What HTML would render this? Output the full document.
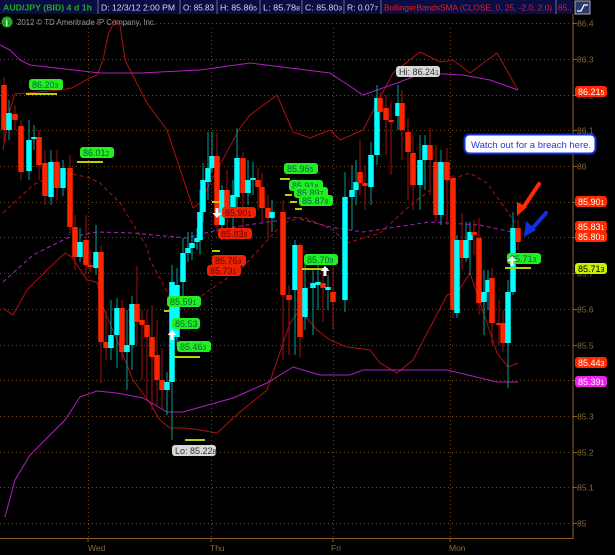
<!DOCTYPE html>
<html><head><meta charset="utf-8"><style>
html,body{margin:0;padding:0;background:#000;width:615px;height:555px;overflow:hidden}
svg{display:block}
text{font-family:"Liberation Sans",sans-serif}
</style></head><body>
<svg id="s" width="615" height="555" viewBox="0 0 615 555" xmlns="http://www.w3.org/2000/svg">
<rect width="615" height="555" fill="#000"/>
<rect x="0" y="0" width="573" height="14" fill="#0a0c45"/>
<g stroke="#6a6a8a" stroke-width="1">
<line x1="98" y1="0" x2="98" y2="14"/><line x1="180" y1="0" x2="180" y2="14"/><line x1="217" y1="0" x2="217" y2="14"/>
<line x1="260" y1="0" x2="260" y2="14"/><line x1="302" y1="0" x2="302" y2="14"/><line x1="344" y1="0" x2="344" y2="14"/>
<line x1="381" y1="0" x2="381" y2="14"/><line x1="556" y1="0" x2="556" y2="14"/>
</g>
<g font-size="8.5" fill="#d8d8e0">
<text x="3" y="10.5" fill="#22aa22" font-weight="bold" textLength="89" lengthAdjust="spacingAndGlyphs">AUD/JPY (BID) 4 d 1h</text>
<text x="101" y="10.5" textLength="74" lengthAdjust="spacingAndGlyphs">D: 12/3/12 2:00 PM</text>
<text x="183" y="10.5" textLength="31" lengthAdjust="spacingAndGlyphs">O: 85.83</text>
<text x="220" y="10.5" textLength="37" lengthAdjust="spacingAndGlyphs">H: 85.86<tspan font-size="6.5">5</tspan></text>
<text x="263" y="10.5" textLength="37" lengthAdjust="spacingAndGlyphs">L: 85.78<tspan font-size="6.5">8</tspan></text>
<text x="305" y="10.5" textLength="37" lengthAdjust="spacingAndGlyphs">C: 85.80<tspan font-size="6.5">3</tspan></text>
<text x="347" y="10.5" textLength="31" lengthAdjust="spacingAndGlyphs">R: 0.07<tspan font-size="6.5">7</tspan></text>
<text x="384" y="10.5" fill="#e02020" textLength="168" lengthAdjust="spacingAndGlyphs">BollingerBandsSMA (CLOSE, 0, 25, -2.0, 2.0)</text>
<text x="558" y="10.5" fill="#e02020" textLength="14" lengthAdjust="spacingAndGlyphs">85..</text>
</g>
<rect x="575" y="1" width="15" height="13" fill="#2a3a6a" stroke="#aab" stroke-width="1"/>
<polyline points="577,11 581,11 584,5 588,5" fill="none" stroke="#fff" stroke-width="1.3"/>
<circle cx="7" cy="22" r="5.5" fill="#22aa22"/>
<text x="5.5" y="26" font-size="9" fill="#fff" font-weight="bold">i</text>
<text x="17" y="25" font-size="8.5" fill="#9a9a9a" textLength="139" lengthAdjust="spacingAndGlyphs">2012 © TD Ameritrade IP Company, Inc.</text>
<g id="grid" stroke="#6a4a1a" stroke-width="1" stroke-dasharray="1,3"></g>
<line x1="573" y1="14" x2="573" y2="539" stroke="#8a6020"/>
<line x1="0" y1="538.5" x2="573" y2="538.5" stroke="#8a6020"/>
<g stroke="#8a6020"><line x1="88" y1="538" x2="88" y2="542"/><line x1="211" y1="538" x2="211" y2="542"/><line x1="333" y1="538" x2="333" y2="542"/><line x1="450" y1="538" x2="450" y2="542"/></g>
<g font-size="8.5" fill="#8a6a30">
<text x="88" y="551">Wed</text><text x="210" y="551">Thu</text><text x="331" y="551">Fri</text><text x="449" y="551">Mon</text>
</g>
<g id="ax" font-size="8.5" fill="#8a6a30"></g>
<g id="bands" fill="none" stroke-width="1">
<polyline stroke="#b01010" points="3,150 10,110 15,94 27,93 60,90 72,88 90,78 97,75 103,60 108,35 115,20 120,25 125,60 147,103 167,130 193,208 200,203 217,170 240,128 250,115 277,95 293,132 310,138 330,130 340,140 363,130 393,73 420,52 440,62 453,60 470,73 497,53 518,90"/>
<polyline stroke="#b01010" points="3,308 13,315 27,290 47,270 65,253 72,257 87,280 97,282 103,307 117,340 133,380 150,403 160,420 170,428 185,428 200,430 217,433 240,412 267,390 290,323 300,310 317,330 330,340 347,347 370,350 380,363 397,373 413,360 447,295 457,293 470,273 497,353 508,367 518,363"/>
<polyline stroke="#b01010" stroke-dasharray="4,3" points="3,213 33,185 60,172 87,177 100,183 120,203 147,247 150,260 170,297 200,297 243,267 283,223 303,217 333,230 347,243 380,233 413,203 440,183 470,173 487,183 517,225"/>
<polyline stroke="#b020c0" points="0,45 10,50 20,60 30,65 100,73 140,73 200,70 250,63 290,68 330,73 363,95 397,83 423,73 463,75 490,80 518,90"/>
<polyline stroke="#b020c0" points="5,517 15,480 30,455 50,435 65,420 80,397 97,391 117,393 143,398 167,412 183,412 233,398 267,383 293,367 320,375 350,375 363,370 447,370 497,382 518,382"/>
<polyline stroke="#b020c0" stroke-dasharray="4,3" points="3,282 33,255 67,238 97,232 133,233 187,238 217,230 247,225 283,220 293,217 330,227 363,232 430,222 480,225 517,233"/>
</g>
<g id="c"></g>
<g id="tags"></g>
<rect x="464.5" y="134.5" width="131" height="19" rx="5" fill="#fff" stroke="#1030e0" stroke-width="2"/>
<text x="471" y="148" font-size="9.5" fill="#2040d0">Watch out for a breach here.</text>
<g stroke-linecap="round">
<line x1="539" y1="184" x2="523" y2="208" stroke="#ff2a00" stroke-width="4"/>
<polygon points="517,216 517,202 527,207" fill="#ff2a00"/>
<line x1="546" y1="213" x2="531" y2="230" stroke="#1030e0" stroke-width="4"/>
<polygon points="524,237 526,221 536,230" fill="#1030e0"/>
</g>
</svg>
<script>
var s="http://www.w3.org/2000/svg";
function el(p,t,a,tx){var e=document.createElementNS(s,t);for(var k in a)e.setAttribute(k,a[k]);if(tx!=null)e.textContent=tx;p.appendChild(e);return e;}
var G=document.getElementById('grid');
var Y=function(p){return 523-(p-85)*357;};
var labs=["85","85.1","85.2","85.3","85.4","85.5","85.6","85.7","85.8","85.9","86","86.1","86.2","86.3","86.4"];
var AX=document.getElementById('ax');
for(var i=0;i<15;i++){var y=Math.round(Y(85+i*0.1))+0.5;el(G,'line',{x1:0,y1:y,x2:573,y2:y});el(AX,'line',{x1:573,y1:y,x2:577,y2:y,stroke:'#8a6020'});el(AX,'text',{x:577,y:y+3},labs[i]);}
[88,211,333,450].forEach(function(x){el(G,'line',{x1:x+0.5,y1:28,x2:x+0.5,y2:538});});
var C=[[4,85,130,77,145],[9,130,113,100,140],[15,114,120,105,130],[21,126,172,120,180],[29,171,140,120,180],[34,139,137,125,150],[39,137,165,130,180],[45,163,196,150,205],[51,197,162,150,205],[57,162,188,150,200],[63,188,168,160,196],[70,168,227,155,235],[75,227,257,215,270],[80,257,242,228,262],[86,240,265,215,275],[90,265,267,250,272],[96,268,252,225,275],[101,252,342,245,383],[106,342,348,310,360],[111,348,335,300,360],[117,335,308,298,368],[122,308,352,300,360],[127,352,345,310,390],[132,345,304,296,370],[137,304,322,266,345],[142,320,325,310,380],[147,325,337,310,400],[152,337,357,305,410],[157,355,380,320,405],[162,380,390,348,410],[167,390,382,372,415],[172,382,282,265,440],[177,337,285,268,345],[183,282,253,238,300],[188,253,248,232,262],[192,248,243,232,260],[197,242,238,228,250],[200,240,212,190,255],[203,212,180,163,222],[208,182,168,132,200],[212,168,156,132,172],[217,156,225,133,232],[222,225,190,185,240],[227,190,215,170,240],[233,215,195,180,230],[237,197,158,128,210],[243,158,193,152,228],[248,193,180,160,205],[253,180,178,162,195],[258,180,187,168,210],[262,187,208,173,222],[268,208,218,195,238],[272,218,212,200,232],[283,212,295,200,360],[289,295,300,285,355],[295,290,245,240,355],[300,245,337,243,358],[305,317,288,262,330],[313,288,283,270,335],[318,285,282,265,310],[323,283,288,270,322],[328,290,287,275,310],[333,292,302,262,330],[345,300,197,172,312],[352,197,190,165,230],[356,190,182,160,205],[360,172,183,140,195],[365,183,186,165,210],[371,187,155,142,205],[377,155,98,85,165],[380,98,112,92,120],[386,108,120,95,155],[391,120,120,102,175],[398,116,103,85,130],[402,103,130,90,160],[408,132,152,118,200],[413,153,185,135,210],[420,185,160,135,210],[425,160,145,135,190],[430,145,160,128,195],[436,162,215,145,222],[441,215,162,150,225],[447,162,180,148,225],[453,178,310,175,318],[457,313,240,235,318],[462,240,258,213,270],[466,258,240,222,262],[470,240,232,222,275],[474,232,235,220,255],[479,238,303,218,315],[484,302,292,270,335],[488,292,280,270,310],[492,278,323,268,345],[499,323,323,300,345],[503,323,343,310,352],[508,343,292,280,388],[513,292,228,212,295],[518,228,242,220,250]];
var CG=document.getElementById('c');
C.forEach(function(d){var up=d[2]<d[1];var col=up?'#00ffff':'#ff2400';var wc=up?'#00a0a0':'#a01010';
el(CG,'line',{x1:d[0],y1:d[3],x2:d[0],y2:d[4],stroke:wc,'stroke-width':1});
var t=Math.min(d[1],d[2]),h=Math.max(2,Math.abs(d[1]-d[2]));el(CG,'rect',{x:d[0]-2.75,y:t,width:5.5,height:h,fill:col});});
var T=document.getElementById('tags');
function tag(x,y,txt,sm,bg,fg,w,line){el(T,'rect',{x:x,y:y,width:w,height:11,rx:3,fill:bg});var t=el(T,'text',{x:x+3,y:y+9,'font-size':9,fill:fg},txt);el(t,'tspan',{'font-size':7},sm);
if(line)el(T,'line',{x1:line[0],y1:line[1],x2:line[2],y2:line[1],stroke:'#b8d000','stroke-width':2});}
var gr='#22ee22';
tag(29,79,'86.20','3',gr,'#064',34,[26,94,57]);
tag(80,147,'86.01','2',gr,'#064',34,[77,162,103]);
tag(284,163,'85.96','5',gr,'#064',34,[280,179,290]);
tag(289,180,'85.91','8',gr,'#064',34,[285,195,292]);
tag(294,187,'85.89','7',gr,'#064',34,[290,202,297]);
tag(299,195,'85.87','8',gr,'#064',34,[295,209,302]);
tag(304,254,'85.70','9',gr,'#064',34,[302,269,328]);
tag(167,296,'85.59','1',gr,'#064',34,[164,311,170]);
tag(172,318,'85.53','',gr,'#064',28,null);
tag(177,341,'85.46','3',gr,'#064',34,[174,357,200]);
tag(507,253,'85.71','3',gr,'#064',34,[505,268,531]);
tag(222,207,'85.90','1','#ee2200','#600',34,[212,202,222]);
tag(218,228,'85.83','9','#ee2200','#600',34,null);
tag(212,255,'85.76','3','#ee2200','#600',34,[212,251,220]);
tag(207,265,'85.73','1','#ee2200','#600',34,null);
tag(396,66,'Hi: 86.24','1','#d8d8d8','#333',44,null);
tag(172,445,'Lo: 85.22','8','#d8d8d8','#333',44,[185,440,205]);
tag(575,86,'86.21','5','#ff2a00','#fff',32,null);
tag(575,196,'85.90','1','#ff2a00','#fff',32,null);
tag(575,221,'85.83','1','#ff2a00','#fff',32,null);
tag(575,231,'85.80','3','#ff2a00','#fff',32,null);
tag(575,263,'85.71','3','#c8f000','#000',32,null);
tag(575,357,'85.44','3','#ff2a00','#fff',32,null);
tag(575,376,'85.39','1','#ee22ee','#fff',32,null);
function arr(x,y,down){var d=down?'M'+(x-1.5)+','+(y)+'h3v5h3l-4.5,5l-4.5,-5h3z':'M'+(x-1.5)+','+(y+10)+'h3v-5h3l-4.5,-5l-4.5,5h3z';el(T,'path',{d:d,fill:'#fff'});}
arr(172,330,false);arr(217,208,true);arr(325,266,false);arr(512,256,false);
</script>
</body></html>
